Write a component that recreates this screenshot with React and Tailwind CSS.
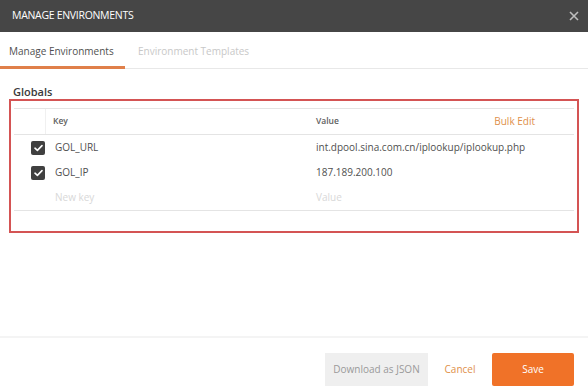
import React from "react";

function Check() {
  return (
    <div className="w-[14px] h-[14px] rounded-[2px] bg-[#404040] flex items-center justify-center">
      <svg width="9" height="8" viewBox="0 0 9 8" fill="none">
        <path d="M1 4.2 L3.4 6.4 L8 1.6" stroke="white" strokeWidth="1.6" strokeLinecap="round" strokeLinejoin="round" />
      </svg>
    </div>
  );
}

function Row({ k, v, checked, placeholder }) {
  return (
    <div className="flex h-[25px] items-center">
      <div className="w-[32px] flex items-center pl-[17px]">
        {checked && <Check />}
      </div>
      <div className={`w-[262px] pl-[9px] ${placeholder ? "text-[#d8d8d8]" : "text-[#505050]"}`}>{k}</div>
      <div className={`flex-1 pl-[8px] ${placeholder ? "text-[#d8d8d8]" : "text-[#505050]"}`}>{v}</div>
    </div>
  );
}

export default function App() {
  return (
    <div className="w-[588px] h-[387px] bg-white flex flex-col overflow-hidden" style={{ fontFamily: '"Open Sans", sans-serif' }}>
      <div className="h-[32px] bg-[#464646] flex items-center justify-between pl-[12px] pr-[9px] shrink-0">
        <span className="text-white text-[10.5px] tracking-[-0.3px]">MANAGE ENVIRONMENTS</span>
        <svg width="10" height="10" viewBox="0 0 10 10">
          <path d="M1 1 L9 9 M9 1 L1 9" stroke="#bdbdbd" strokeWidth="1.6" />
        </svg>
      </div>
      <div className="h-[37px] flex items-end border-b border-[#e8e8e8] shrink-0 text-[10px]">
        <div className="w-[125px] h-full flex items-center pl-[9px] pt-[4px] text-[#505050] border-b-[3px] border-[#e0804a] mb-[-1px]">
          Manage Environments
        </div>
        <div className="h-full flex items-center pl-[13px] pt-[2px] text-[#c8c8c8]">Environment Templates</div>
      </div>
      <div className="pt-[16px] px-[9px] flex-1">
        <div className="pl-[4px] text-[11px] font-semibold text-[#3a3a3a] leading-[14px]">Globals</div>
        <div className="border-2 border-[#d45454] h-[134px] pt-[7px] px-[3px]">
          <div className="border-y border-[#e4e4e4] text-[10px]">
            <div className="flex h-[26px] items-center border-b border-[#e4e4e4] text-[8.5px] font-semibold text-[#606060]">
              <div className="w-[32px] h-full border-r border-[#f0f0f0]"></div>
              <div className="w-[262px] pl-[7px]">Key</div>
              <div className="flex-1 pl-[8px]">Value</div>
              <div className="pr-[39px] text-[10px] font-normal text-[#e0904a]">Bulk Edit</div>
            </div>
            <Row k="GOL_URL" v="int.dpool.sina.com.cn/iplookup/iplookup.php" checked />
            <Row k="GOL_IP" v="187.189.200.100" checked />
            <Row k="New key" v="Value" placeholder />
          </div>
        </div>
      </div>
      <div className="h-[51px] border-t-[2px] border-[#f4f4f4] flex items-center justify-end pr-[14px] shrink-0 text-[10px]">
        <div className="w-[103px] h-[33px] bg-[#efefef] text-[#9a9a9a] flex items-center justify-center mt-[13px]">Download as JSON</div>
        <div className="w-[64px] flex items-center justify-center text-[#e0904a] mt-[13px]">Cancel</div>
        <div className="w-[82px] h-[33px] bg-[#f07228] rounded-[2px] text-white flex items-center justify-center mt-[13px]">Save</div>
      </div>
    </div>
  );
}
